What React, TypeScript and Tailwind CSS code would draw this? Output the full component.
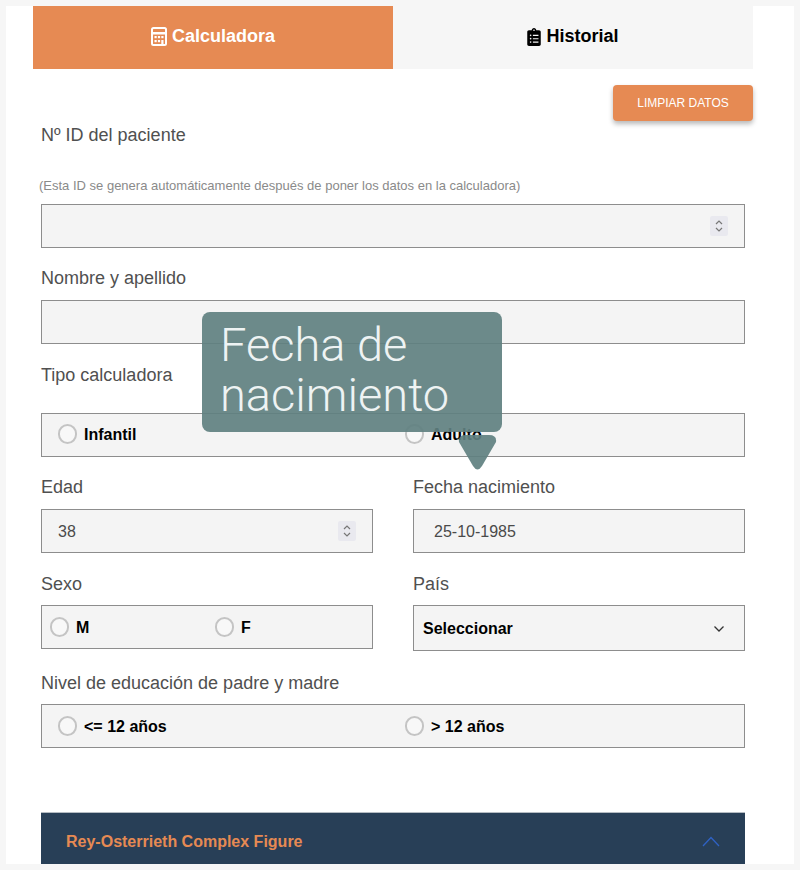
import React from "react";
import { FaClipboardList } from "react-icons/fa";

function Calc() {
  return (
    <svg width="16" height="19" viewBox="0 0 16 19" fill="none" className="shrink-0">
      <rect x="1" y="1" width="14" height="17" rx="1.5" stroke="#fff" strokeWidth="2" />
      <rect x="1" y="5" width="14" height="2.5" fill="#fff" />
      <rect x="3.5" y="9" width="2.2" height="2.2" fill="#fff" />
      <rect x="6.9" y="9" width="2.2" height="2.2" fill="#fff" />
      <rect x="10.3" y="9" width="2.2" height="2.2" fill="#fff" />
      <rect x="3.5" y="13" width="2.2" height="2.2" fill="#fff" />
      <rect x="6.9" y="13" width="2.2" height="2.2" fill="#fff" />
      <rect x="10.3" y="13" width="2.2" height="4" fill="#fff" />
    </svg>
  );
}

function Spinner() {
  return (
    <div className="w-[18px] h-[20px] bg-[#e9e9ef] rounded-[2px] flex items-center justify-center">
      <svg width="10" height="16" viewBox="0 0 10 16" fill="none" stroke="#777" strokeWidth="1.2">
        <path d="M2 6l3-3 3 3" />
        <path d="M2 10l3 3 3-3" />
      </svg>
    </div>
  );
}

function Radio({ label }: { label: string }) {
  return (
    <div className="flex items-center gap-[7px]">
      <span className="w-[19px] h-[20px] -mt-[2px] rounded-full border-2 border-[#c4c4c4] bg-[#f8f8f8]" />
      <span className="text-[16px] font-bold text-black">{label}</span>
    </div>
  );
}

const box = "bg-[#f4f4f4] border border-[#8d8d8d] h-[44px] flex items-center";
const label = "text-[18px] leading-[22px] text-[#505050]";

export default function App() {
  return (
    <div className="h-[870px] bg-[#f6f6f6] px-[6px] pt-[6px] pb-[6px] overflow-hidden" style={{ fontFamily: '"Liberation Sans", Arial, sans-serif' }}>
      <div className="relative h-[858px] bg-white overflow-hidden">
        <div className="mx-[27px] w-[720px] flex h-[63px]">
          <div className="w-1/2 bg-[#e68a53] flex items-center justify-center gap-[5px] text-white font-bold text-[18px] pb-[2px]">
            <Calc />
            Calculadora
          </div>
          <div className="w-1/2 bg-[#f6f6f6] flex items-center justify-center gap-[5px] text-black font-bold text-[18px] pb-[2px]">
            <FaClipboardList className="w-[14px] h-[18px]" />
            Historial
          </div>
        </div>

        <div className="mx-[27px] w-[720px] flex justify-end mt-[16px]">
          <div className="w-[140px] h-[36px] rounded-[4px] bg-[#e68a53] text-white text-[12px] flex items-center justify-center shadow-[0_3px_5px_rgba(0,0,0,0.28)]">
            LIMPIAR DATOS
          </div>
        </div>

        <div className="mx-[35px] w-[704px]">
          <div className={`${label} mt-[3px]`}>Nº ID del paciente</div>
          <div className="text-[13px] leading-[17px] text-[#8a8a8a] mt-[31px] -ml-[2px]">(Esta ID se genera automáticamente después de poner los datos en la calculadora)</div>
          <div className={`${box} mt-[10px] justify-end pr-[16px]`}>
            <Spinner />
          </div>

          <div className={`${label} mt-[19px]`}>Nombre y apellido</div>
          <div className={`${box} mt-[11px]`} />

          <div className={`${label} mt-[20px]`}>Tipo calculadora</div>
          <div className={`${box} mt-[27px] pl-[16px]`}>
            <div className="w-[347px]"><Radio label="Infantil" /></div>
            <Radio label="Adulto" />
          </div>

          <div className="grid gap-x-[40px] mt-[19px] grid-cols-[332px_332px]">
            <div>
              <div className={label}>Edad</div>
              <div className={`${box} mt-[11px] pl-[16px] pr-[16px] justify-between`}>
                <span className="text-[16px] text-[#4a4a4a] pt-[2px]">38</span>
                <Spinner />
              </div>
            </div>
            <div>
              <div className={label}>Fecha nacimiento</div>
              <div className={`${box} mt-[11px] pl-[20px]`}>
                <span className="text-[16px] text-[#4a4a4a] pt-[2px]">25-10-1985</span>
              </div>
            </div>

            <div className="mt-[20px]">
              <div className={label}>Sexo</div>
              <div className={`${box} mt-[10px] pl-[8px] pt-[2px]`}>
                <div className="w-[165px]"><Radio label="M" /></div>
                <Radio label="F" />
              </div>
            </div>
            <div className="mt-[20px]">
              <div className={label}>País</div>
              <div className={`${box} !h-[46px] mt-[10px] pl-[9px] pr-[19px] justify-between pt-[2px]`}>
                <span className="text-[16px] font-bold text-black">Seleccionar</span>
                <svg width="12" height="8" viewBox="0 0 12 8" fill="none" stroke="#333" strokeWidth="1.3">
                  <path d="M1.5 1.5l4.5 4.5 4.5-4.5" />
                </svg>
              </div>
            </div>
          </div>

          <div className={`${label} mt-[21px]`}>Nivel de educación de padre y madre</div>
          <div className={`${box} mt-[10px] pl-[16px] pt-[2px]`}>
            <div className="w-[347px]"><Radio label="<= 12 años" /></div>
            <Radio label="> 12 años" />
          </div>

          <div className="mt-[64px] h-[60px] bg-[#283f57] border-t border-[#b5bcc3] flex items-center justify-between pl-[25px] pr-[25px] pb-[2px]">
            <span className="text-[16px] font-bold text-[#e68a53]">Rey-Osterrieth Complex Figure</span>
            <svg width="18" height="11" viewBox="0 0 18 11" fill="none" stroke="#2f62c4" strokeWidth="1.3">
              <path d="M1 10l8-8.5 8 8.5" />
            </svg>
          </div>
        </div>

        <div className="absolute left-[196px] top-[306px] w-[300px] h-[120px] rounded-[8px] bg-[#5f8080]/92 pl-[18px] pt-[8px] text-[47px] leading-[50px] text-[#eef3f3] font-light" style={{ fontFamily: 'Roboto, sans-serif' }}>
          Fecha de
          <br />
          nacimiento
        </div>
        <svg className="absolute left-[452px] top-[429px]" width="39" height="36" viewBox="0 0 39 36">
          <path d="M8 0h23q8 0 7 7L24 31q-4.500 7-9 0L1 7q-1-7 7-7z" fill="#5f8080" fillOpacity="0.92" />
        </svg>
      </div>
    </div>
  );
}
